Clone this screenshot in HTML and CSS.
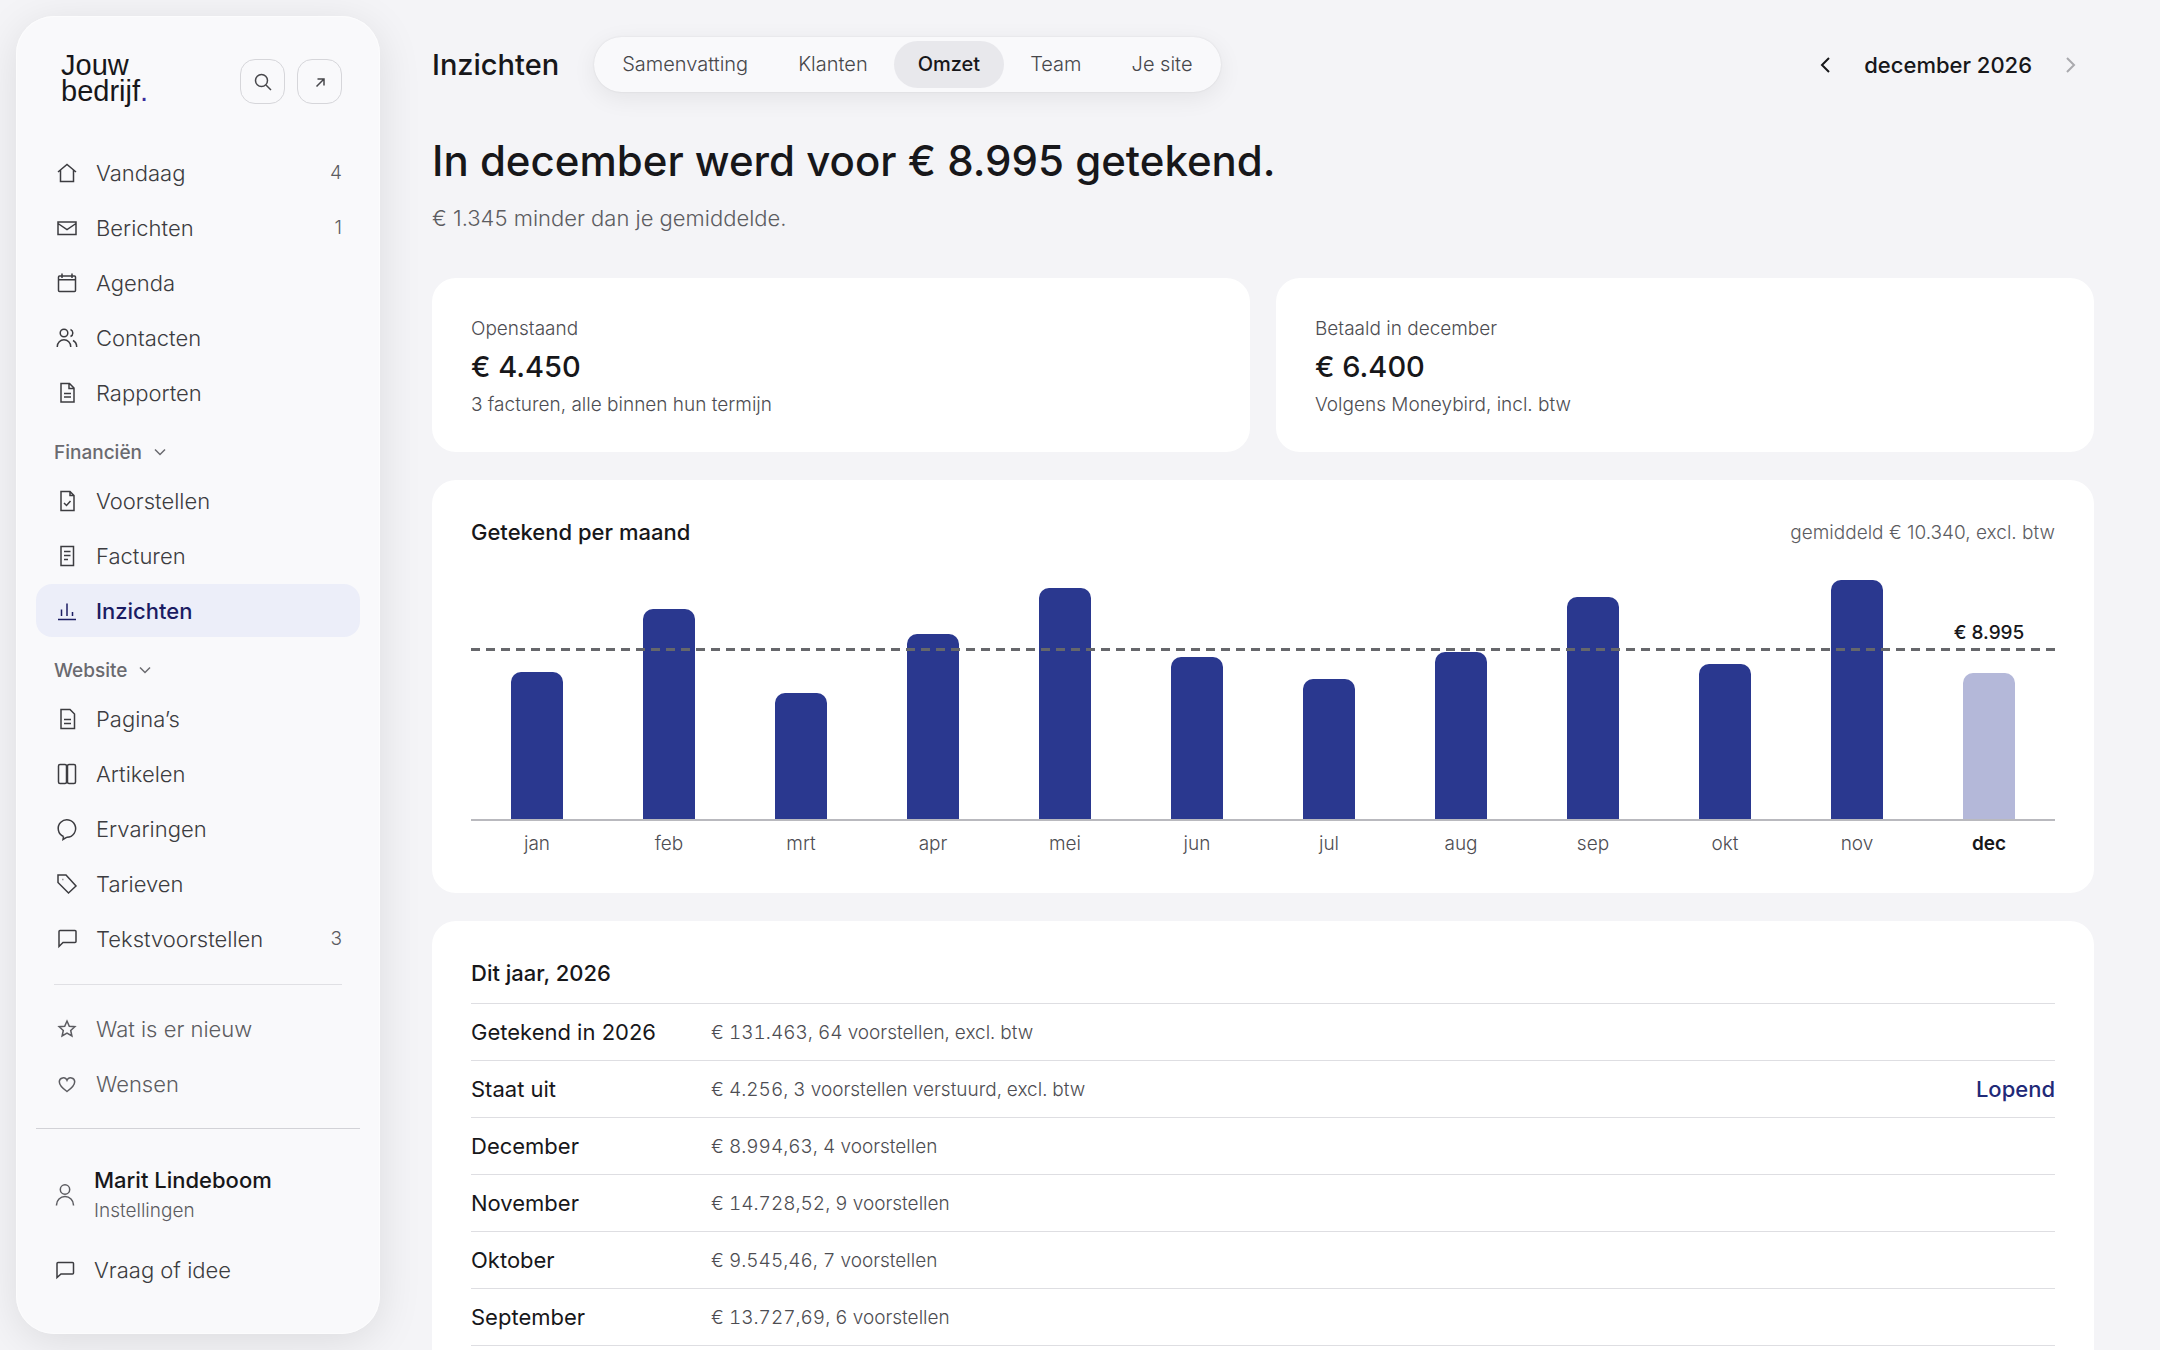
FILE: index.html
```html
<!DOCTYPE html>
<html lang="nl">
<head>
  <meta charset="UTF-8">
  <meta name="viewport" content="width=device-width, initial-scale=1.0">
  <title>Inzichten - Omzet</title>
  <link rel="stylesheet" href="styles.css">
</head>
<body>
  <aside class="sidebar">
    <div class="sidebar-header">
      <a class="logo" href="#">Jouw<br>bedrijf<span class="logo-dot">.</span></a>
      <div class="header-buttons">
        <button class="icon-btn" aria-label="Zoeken">
          <svg class="icon" viewBox="0 0 26 26"><circle cx="11.5" cy="11.5" r="6"/><path d="M16 16l5 5"/></svg>
        </button>
        <button class="icon-btn" aria-label="Bekijk site">
          <svg class="icon" viewBox="0 0 26 26"><path d="M9.5 17.5l7-7M10.5 10h6.500v6.500"/></svg>
        </button>
      </div>
    </div>

    <nav class="nav">
      <ul class="nav-list">
        <li><a class="nav-item" href="#">
          <svg class="icon" viewBox="0 0 26 26"><path d="M4 12l9-7.500 9 7.500M6.500 10.200V21.500h13V10.200"/></svg>
          Vandaag <span class="count">4</span></a></li>
        <li><a class="nav-item" href="#">
          <svg class="icon" viewBox="0 0 26 26"><path d="M4 7h18v12.500H4zM4 8.500l9 6 9-6"/></svg>
          Berichten <span class="count">1</span></a></li>
        <li><a class="nav-item" href="#">
          <svg class="icon" viewBox="0 0 26 26"><rect x="4.500" y="6" width="17" height="15.500" rx="1"/><path d="M4.500 9.800h17M8 3.500V8M18 3.500V8"/></svg>
          Agenda</a></li>
        <li><a class="nav-item" href="#">
          <svg class="icon" viewBox="0 0 26 26"><circle cx="10" cy="8" r="3.800"/><path d="M3.300 22v-.5a6.700 6.700 0 0 1 13.400 0v.5M16.500 4.500a3.800 3.800 0 0 1 0 7M19 15.500c2.300 1.200 3.700 3.500 3.700 6.500"/></svg>
          Contacten</a></li>
        <li><a class="nav-item" href="#">
          <svg class="icon" viewBox="0 0 26 26"><path d="M7 3.500h8.500L20 8v14H7zM15 3.500V8.500h5M10 13.500h7M10 17h7"/></svg>
          Rapporten</a></li>
      </ul>

      <button class="nav-heading">Financiën
        <svg class="chevron" viewBox="0 0 12 12"><path d="M1 3.500l5 5 5-5"/></svg>
      </button>
      <ul class="nav-list">
        <li><a class="nav-item" href="#">
          <svg class="icon" viewBox="0 0 26 26"><path d="M7 3.500h9L20 7.500v15H7zM16 3.500v4h4M10 15l2.500 2.500 4-4.500"/></svg>
          Voorstellen</a></li>
        <li><a class="nav-item" href="#">
          <svg class="icon" viewBox="0 0 26 26"><path d="M7 3.500h12.500v19H7zM10 8.500h6.500M10 12.500h6.500M10 16.500h4"/></svg>
          Facturen</a></li>
        <li><a class="nav-item active" href="#">
          <svg class="icon" viewBox="0 0 26 26"><path d="M4 21.500h18M7.500 18v-6.500M13 18V5.500M18.500 18v-4"/></svg>
          Inzichten</a></li>
      </ul>

      <button class="nav-heading">Website
        <svg class="chevron" viewBox="0 0 12 12"><path d="M1 3.500l5 5 5-5"/></svg>
      </button>
      <ul class="nav-list">
        <li><a class="nav-item" href="#">
          <svg class="icon" viewBox="0 0 26 26"><path d="M7 3.500h9L20.500 8v14.500H7zM10 13.500h7M10 17.500h7"/></svg>
          Pagina’s</a></li>
        <li><a class="nav-item" href="#">
          <svg class="icon" viewBox="0 0 26 26"><rect x="4.500" y="3.500" width="8" height="19" rx="1.500"/><rect x="13.500" y="3.500" width="8" height="19" rx="1.500"/></svg>
          Artikelen</a></li>
        <li><a class="nav-item" href="#">
          <svg class="icon" viewBox="0 0 26 26"><path d="M9.500 20.500a8.700 8.700 0 1 1 3.500.7M9.500 20.500l-.5 3 4-2.300"/></svg>
          Ervaringen</a></li>
        <li><a class="nav-item" href="#">
          <svg class="icon" viewBox="0 0 26 26"><path d="M4 4h8l10 11-7.500 7L4 11.500z"/><path d="M8.500 8.500h.8"/></svg>
          Tarieven</a></li>
        <li><a class="nav-item" href="#">
          <svg class="icon" viewBox="0 0 26 26"><path d="M5 20.500V5.500a1 1 0 0 1 1-1h15a1 1 0 0 1 1 1v10a1 1 0 0 1-1 1H9z"/></svg>
          Tekstvoorstellen <span class="count">3</span></a></li>
      </ul>

      <ul class="nav-list nav-extra">
        <li><a class="nav-item" href="#">
          <svg class="icon" viewBox="0 0 26 26"><path d="M13 5l2.300 5.200 5.600.5-4.200 3.800 1.200 5.500-4.900-2.900-4.900 2.900 1.200-5.500-4.200-3.800 5.600-.5z"/></svg>
          Wat is er nieuw</a></li>
        <li><a class="nav-item" href="#">
          <svg class="icon" viewBox="0 0 26 26"><path d="M13 20.500C8 17 5.300 14 5.300 10.800a4 4 0 0 1 7.700-1.500 4 4 0 0 1 7.700 1.500C20.700 14 18 17 13 20.500z"/></svg>
          Wensen</a></li>
      </ul>
    </nav>

    <div class="sidebar-footer">
      <a class="user" href="#">
        <svg class="icon" viewBox="0 0 26 26"><circle cx="13" cy="7.500" r="4.700"/><path d="M4.500 23.500v-.5a8.500 8.500 0 0 1 17 0v.5"/></svg>
        <span>
          <span class="user-name">Marit Lindeboom</span>
          <span class="user-sub">Instellingen</span>
        </span>
      </a>
      <button class="nav-item feedback">
        <svg class="icon" viewBox="0 0 26 26"><path d="M5 20.500V6.500a1 1 0 0 1 1-1h14.500a1 1 0 0 1 1 1v9.500a1 1 0 0 1-1 1H9z"/></svg>
        Vraag of idee
      </button>
    </div>
  </aside>

  <main class="main">
    <header class="topbar">
      <h2 class="page-title">Inzichten</h2>
      <nav class="tabs">
        <a class="tab" href="#">Samenvatting</a>
        <a class="tab" href="#">Klanten</a>
        <a class="tab active" href="#">Omzet</a>
        <a class="tab" href="#">Team</a>
        <a class="tab" href="#">Je site</a>
      </nav>
      <div class="month-picker">
        <button class="month-btn" aria-label="Vorige maand">
          <svg class="arrow" viewBox="0 0 20 20"><path d="M13 3l-7 7 7 7"/></svg>
        </button>
        <span class="month">december 2026</span>
        <button class="month-btn" aria-label="Volgende maand" disabled>
          <svg class="arrow" viewBox="0 0 20 20"><path d="M7 3l7 7-7 7"/></svg>
        </button>
      </div>
    </header>

    <h1 class="headline">In december werd voor € 8.995 getekend.</h1>
    <p class="subline">€ 1.345 minder dan je gemiddelde.</p>

    <section class="stats">
      <div class="card">
        <p class="stat-text">Openstaand</p>
        <p class="stat-value">€ 4.450</p>
        <p class="stat-text">3 facturen, alle binnen hun termijn</p>
      </div>
      <div class="card">
        <p class="stat-text">Betaald in december</p>
        <p class="stat-value">€ 6.400</p>
        <p class="stat-text">Volgens Moneybird, incl. btw</p>
      </div>
    </section>

    <section class="card">
      <div class="card-header">
        <h3 class="card-title">Getekend per maand</h3>
        <span class="card-note">gemiddeld € 10.340, excl. btw</span>
      </div>
      <div class="chart">
        <div class="plot">
          <div class="col"><div class="bar" style="height: 61.2%"></div></div>
          <div class="col"><div class="bar" style="height: 87.5%"></div></div>
          <div class="col"><div class="bar" style="height: 52.5%"></div></div>
          <div class="col"><div class="bar" style="height: 77.1%"></div></div>
          <div class="col"><div class="bar" style="height: 96.2%"></div></div>
          <div class="col"><div class="bar" style="height: 67.5%"></div></div>
          <div class="col"><div class="bar" style="height: 58.3%"></div></div>
          <div class="col"><div class="bar" style="height: 69.6%"></div></div>
          <div class="col"><div class="bar" style="height: 92.5%"></div></div>
          <div class="col"><div class="bar" style="height: 64.6%"></div></div>
          <div class="col"><div class="bar" style="height: 99.6%"></div></div>
          <div class="col"><span class="bar-value">€ 8.995</span><div class="bar current" style="height: 60.8%"></div></div>
          <div class="average" style="bottom: 70%"></div>
        </div>
        <div class="months">
          <span>jan</span><span>feb</span><span>mrt</span><span>apr</span>
          <span>mei</span><span>jun</span><span>jul</span><span>aug</span>
          <span>sep</span><span>okt</span><span>nov</span><span class="current-month">dec</span>
        </div>
      </div>
    </section>

    <section class="card">
      <h3 class="card-title">Dit jaar, 2026</h3>
      <table class="year-table">
        <tr><th scope="row">Getekend in 2026</th><td>€ 131.463, 64 voorstellen, excl. btw</td><td></td></tr>
        <tr><th scope="row">Staat uit</th><td>€ 4.256, 3 voorstellen verstuurd, excl. btw</td><td class="status"><a href="#">Lopend</a></td></tr>
        <tr><th scope="row">December</th><td>€ 8.994,63, 4 voorstellen</td><td></td></tr>
        <tr><th scope="row">November</th><td>€ 14.728,52, 9 voorstellen</td><td></td></tr>
        <tr><th scope="row">Oktober</th><td>€ 9.545,46, 7 voorstellen</td><td></td></tr>
        <tr><th scope="row">September</th><td>€ 13.727,69, 6 voorstellen</td><td></td></tr>
      </table>
    </section>
  </main>
</body>
</html>
```
FILE: styles.css
```css
* {
  box-sizing: border-box;
}

body {
  margin: 0;
  height: 100vh;
  display: flex;
  background-color: #f4f4f7;
  color: #17171a;
  font-family: Inter, "Open Sans", sans-serif;
  font-size: 22px;
  overflow: hidden;
}

h1, h2, h3, p, ul {
  margin: 0;
  padding: 0;
}

ul {
  list-style: none;
}

a {
  color: inherit;
  text-decoration: none;
}

button {
  border: none;
  padding: 0;
  background: none;
  color: inherit;
  font: inherit;
  cursor: pointer;
}

svg {
  fill: none;
  stroke: currentColor;
  stroke-width: 2;
  flex-shrink: 0;
}

/* Sidebar */
.sidebar {
  flex: 0 0 364px;
  margin: 16px;
  padding: 36px 20px;
  border-radius: 38px;
  background-color: #f9f9fb;
  box-shadow: 0 8px 44px rgba(0, 0, 0, 0.1), inset 0 0 0 1px #fcfcfd;
}

.sidebar-header {
  display: flex;
  justify-content: space-between;
  align-items: flex-end;
  padding: 0 18px 0 25px;
  margin-bottom: 42px;
}

.logo {
  font-family: "Liberation Sans", Arial, sans-serif;
  font-size: 29px;
  line-height: 26px;
}

.logo-dot {
  color: #3a2a9c;
}

.header-buttons {
  display: flex;
  gap: 12px;
}

.icon-btn {
  width: 45px;
  height: 45px;
  display: flex;
  align-items: center;
  justify-content: center;
  border: 1px solid #d6d6da;
  border-radius: 15px;
  color: #47474b;
}

.icon {
  width: 26px;
  height: 26px;
  stroke-width: 1.5;
}

.nav-list {
  display: flex;
  flex-direction: column;
  gap: 2px;
}

.nav-item {
  width: 100%;
  height: 53px;
  display: flex;
  align-items: center;
  gap: 16px;
  padding: 0 18px;
  border-radius: 16px;
  color: #3c3c40;
  font-weight: 300;
}

.nav-item.active {
  background-color: #eceef9;
  color: #1b1c63;
  font-weight: 500;
}

.count {
  margin-left: auto;
  font-size: 19px;
  color: #5c5c61;
}

.nav-heading {
  display: flex;
  align-items: center;
  gap: 12px;
  height: 55px;
  padding: 11px 18px 0;
  font-size: 19px;
  font-weight: 500;
  color: #6a6a6f;
}

.chevron {
  width: 12px;
  height: 12px;
  stroke-width: 1.5;
}

.nav-extra {
  margin: 19px 18px 0;
  padding-top: 17px;
  border-top: 1px solid #e0e0e4;
}

.nav-extra .nav-item {
  padding: 0;
  color: #5c5c61;
}

.sidebar-footer {
  margin-top: 18px;
  padding-top: 35px;
  border-top: 1px solid #d2d2d7;
}

.user {
  display: flex;
  align-items: center;
  gap: 16px;
  padding: 0 16px;
  color: #5c5c61;
}

.user-name {
  display: block;
  line-height: 32px;
  font-weight: 500;
  color: #17171a;
}

.user-sub {
  display: block;
  font-size: 19px;
  line-height: 30px;
  font-weight: 300;
}

.feedback {
  margin-top: 17px;
  padding: 0 16px;
}

/* Main */
.main {
  flex: 1;
  min-width: 0;
  padding: 37px 66px 40px 36px;
  overflow: hidden auto;
  scrollbar-width: none;
}

.topbar {
  display: flex;
  align-items: center;
  margin-bottom: 42px;
}

.page-title {
  margin-right: 35px;
  font-size: 29px;
  font-weight: 500;
}

.tabs {
  display: flex;
  gap: 2px;
  padding: 4px;
  border-radius: 28px;
  background-color: #f9f9fb;
  box-shadow: 0 6px 24px rgba(0, 0, 0, 0.07), 0 0 2px rgba(0, 0, 0, 0.1);
}

.tab {
  padding: 0 24px;
  border-radius: 24px;
  font-size: 20px;
  line-height: 47px;
  font-weight: 300;
  color: #47474b;
}

.tab.active {
  background-color: #e8e8ec;
  color: #17171a;
  font-weight: 500;
}

.month-picker {
  display: flex;
  align-items: center;
  gap: 14px;
  margin-left: auto;
  font-weight: 500;
}

.month-btn {
  width: 48px;
  height: 48px;
  display: flex;
  align-items: center;
  justify-content: center;
}

.month-btn:disabled {
  color: #a9a9ae;
  cursor: default;
}

.arrow {
  width: 20px;
  height: 20px;
}

.headline {
  font-size: 42px;
  line-height: 54px;
  font-weight: 500;
}

.subline {
  margin: 15px 0 45px;
  line-height: 30px;
  font-weight: 300;
  color: #5c5c61;
}

.stats {
  display: grid;
  grid-template-columns: 1fr 1fr;
  gap: 26px;
}

.stats,
.card {
  margin-bottom: 28px;
}

.card {
  padding: 35px 39px;
  border-radius: 24px;
  background-color: #fff;
}

.stats .card {
  margin-bottom: 0;
  padding: 37px 39px 33px;
}

.stat-text {
  font-size: 19px;
  line-height: 28px;
  font-weight: 300;
  color: #4d4d52;
}

.stat-value {
  font-size: 29px;
  line-height: 48px;
  font-weight: 500;
}

.card-header {
  display: flex;
  justify-content: space-between;
  align-items: center;
  margin-bottom: 30px;
}

.card-title {
  font-size: 22px;
  line-height: 34px;
  font-weight: 500;
}

.card-note {
  font-size: 19px;
  font-weight: 300;
  color: #5c5c61;
}

/* Chart */
.plot {
  position: relative;
  display: flex;
  height: 242px;
  border-bottom: 2px solid #b9b9be;
}

.col {
  flex: 1;
  display: flex;
  flex-direction: column;
  align-items: center;
  justify-content: flex-end;
}

.bar {
  width: 39%;
  border-radius: 10px 10px 0 0;
  background-color: #2a388f;
}

.bar.current {
  background-color: #b4b8d9;
}

.bar-value {
  margin-bottom: 26px;
  font-size: 19px;
  line-height: 28px;
  font-weight: 500;
}

/* Dashed line over the bars */
.average {
  position: absolute;
  left: 0;
  right: 0;
  height: 3px;
  background: repeating-linear-gradient(to right, #66676b 0 9px, transparent 9px 15px);
}

.months {
  display: flex;
  padding-top: 9px;
  font-size: 19px;
  line-height: 28px;
  font-weight: 300;
  color: #4d4d52;
}

.months span {
  flex: 1;
  text-align: center;
}

.months .current-month {
  color: #17171a;
  font-weight: 600;
}

/* Table */
.year-table {
  width: 100%;
  margin-top: 13px;
  border-collapse: collapse;
}

.year-table tr {
  height: 57px;
  border-top: 1px solid #dedee2;
  border-bottom: 1px solid #dedee2;
}

.year-table th {
  width: 240px;
  padding: 0;
  text-align: left;
  font-weight: 400;
}

.year-table td {
  padding: 0;
  font-size: 19px;
  font-weight: 300;
  font-variant-numeric: tabular-nums;
  color: #4d4d52;
}

.year-table .status {
  text-align: right;
  font-size: 22px;
  font-weight: 500;
  color: #1f2a78;
}
```
